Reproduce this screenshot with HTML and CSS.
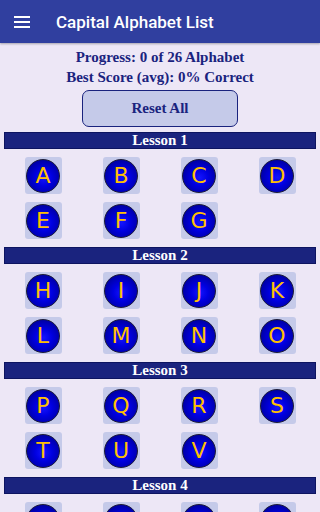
FILE: index.html
```html
<!DOCTYPE html>
<html>
<head>
<meta charset="utf-8">
<link rel="stylesheet" href="styles.css">
</head>
<body>
<header class="appbar">
  <svg class="menu" width="16" height="12" viewBox="0 0 16 12"><rect x="0" y="0" width="16" height="2" fill="#fff"/><rect x="0" y="5" width="16" height="2" fill="#fff"/><rect x="0" y="10" width="16" height="2" fill="#fff"/></svg>
  <h1 class="title">Capital Alphabet List</h1>
</header>
<main class="content">
  <p class="stat">Progress: 0 of 26 Alphabet</p>
  <p class="stat">Best Score (avg): 0% Correct</p>
  <div class="btnrow"><button class="reset">Reset All</button></div>

  <section class="lesson">
    <h2 class="bar">Lesson 1</h2>
    <div class="grid">
      <div class="tile"><span class="ball">A</span></div>
      <div class="tile"><span class="ball">B</span></div>
      <div class="tile"><span class="ball">C</span></div>
      <div class="tile"><span class="ball">D</span></div>
      <div class="tile"><span class="ball">E</span></div>
      <div class="tile"><span class="ball">F</span></div>
      <div class="tile"><span class="ball">G</span></div>
    </div>
  </section>
  <section class="lesson">
    <h2 class="bar">Lesson 2</h2>
    <div class="grid">
      <div class="tile"><span class="ball">H</span></div>
      <div class="tile"><span class="ball">I</span></div>
      <div class="tile"><span class="ball">J</span></div>
      <div class="tile"><span class="ball">K</span></div>
      <div class="tile"><span class="ball">L</span></div>
      <div class="tile"><span class="ball">M</span></div>
      <div class="tile"><span class="ball">N</span></div>
      <div class="tile"><span class="ball">O</span></div>
    </div>
  </section>
  <section class="lesson">
    <h2 class="bar">Lesson 3</h2>
    <div class="grid">
      <div class="tile"><span class="ball">P</span></div>
      <div class="tile"><span class="ball">Q</span></div>
      <div class="tile"><span class="ball">R</span></div>
      <div class="tile"><span class="ball">S</span></div>
      <div class="tile"><span class="ball">T</span></div>
      <div class="tile"><span class="ball">U</span></div>
      <div class="tile"><span class="ball">V</span></div>
    </div>
  </section>
  <section class="lesson">
    <h2 class="bar">Lesson 4</h2>
    <div class="grid">
      <div class="tile"><span class="ball">W</span></div>
      <div class="tile"><span class="ball">X</span></div>
      <div class="tile"><span class="ball">Y</span></div>
      <div class="tile"><span class="ball">Z</span></div>
    </div>
  </section>
</main>
</body>
</html>
```
FILE: styles.css
```css
html, body {
  margin: 0;
  padding: 0;
  background: #ede7f6;
}
body {
  width: 320px;
  height: 512px;
  overflow: hidden;
}
.appbar {
  height: 43px;
  background: #303f9f;
  display: flex;
  align-items: center;
  box-shadow: 0 1px 2px rgba(0,0,0,0.3);
}
.menu {
  margin-left: 14px;
  margin-top: 1px;
}
.title {
  margin: 0 0 0 26px;
  font-family: Roboto, "Noto Sans", sans-serif;
  font-weight: 500;
  font-size: 17px;
  color: #fff;
}
.content {
  padding: 4px 4px 0;
}
.stat {
  margin: 0;
  text-align: center;
  font-family: "Liberation Serif", serif;
  font-weight: bold;
  font-size: 15px;
  line-height: 20px;
  color: #1a237e;
}
.btnrow {
  display: flex;
  justify-content: center;
  margin-top: 3px;
}
.reset {
  width: 156px;
  height: 37px;
  background: #c5cae9;
  border: 1px solid #1a237e;
  border-radius: 7px;
  font-family: "Liberation Serif", serif;
  font-weight: bold;
  font-size: 15px;
  color: #1a237e;
  padding: 0;
}
.lesson {
  margin-top: 5px;
}
.lesson + .lesson {
  margin-top: 8px;
}
.bar {
  margin: 0;
  height: 15px;
  background: #1a237e;
  border: 1px solid #0d1460;
  color: #fff;
  text-align: center;
  font-family: "Liberation Serif", serif;
  font-weight: bold;
  font-size: 15px;
  line-height: 15px;
}
.grid {
  display: grid;
  grid-template-columns: repeat(4, 1fr);
  row-gap: 8px;
  margin-top: 8px;
  justify-items: center;
}
.tile {
  width: 37px;
  height: 37px;
  background: #c5cae9;
  border-radius: 3px;
  display: flex;
  align-items: center;
  justify-content: center;
}
.ball {
  width: 32px;
  height: 32px;
  border-radius: 50%;
  border: 1px solid #1c1c3a;
  background: radial-gradient(circle at 52% 55%, #1414ff 0%, #0000e0 35%, #0000a8 70%, #000058 100%);
  display: flex;
  align-items: center;
  justify-content: center;
  font-family: "DejaVu Sans", sans-serif;
  font-size: 22px;
  color: #ffc000;
  line-height: 1;
}
```
